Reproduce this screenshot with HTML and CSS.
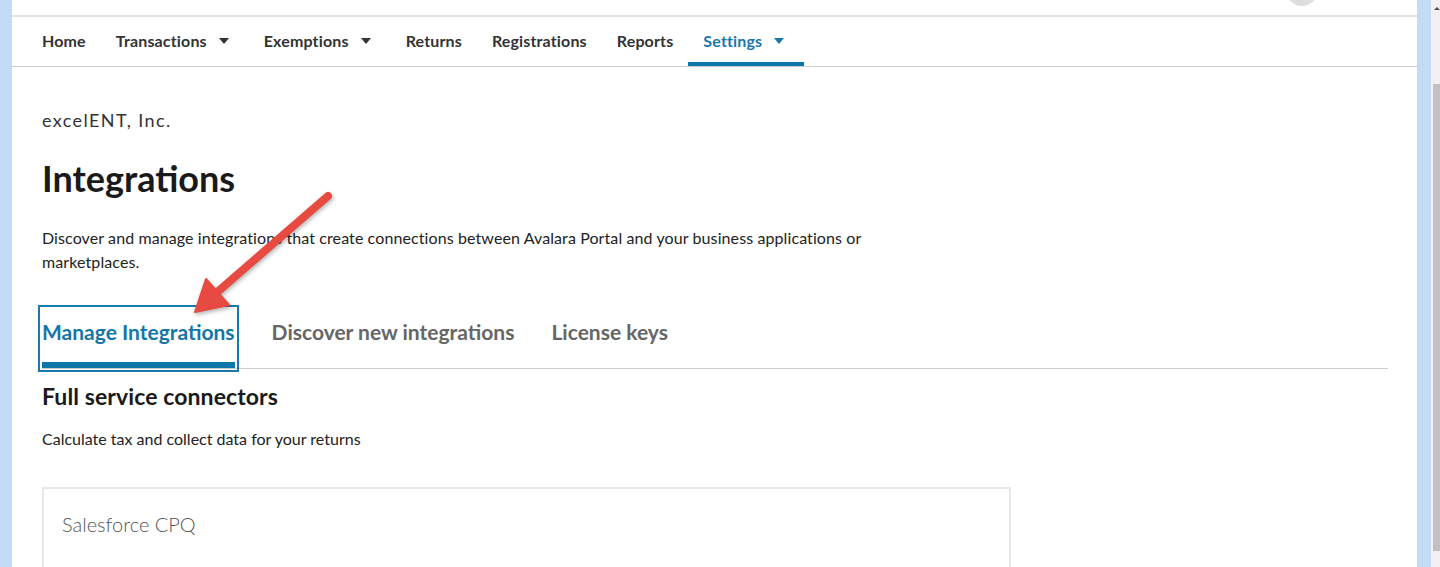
FILE: index.html
```html
<!DOCTYPE html>
<html lang="en">
<head>
    <meta charset="UTF-8">
    <meta name="viewport" content="width=device-width, initial-scale=1.0">
    <title>Integrations</title>
    <link rel="stylesheet" href="styles.css">
</head>
<body>
    <div class="side-strip"></div>

    <div class="app">
        <div class="topbar">
            <div class="avatar"></div>
        </div>

        <nav class="main-nav">
            <a class="nav-item">Home</a>
            <a class="nav-item">Transactions <span class="caret"></span></a>
            <a class="nav-item">Exemptions <span class="caret"></span></a>
            <a class="nav-item">Returns</a>
            <a class="nav-item">Registrations</a>
            <a class="nav-item">Reports</a>
            <a class="nav-item active">Settings <span class="caret"></span></a>
        </nav>

        <div class="content">
            <div class="company">excelENT, Inc.</div>
            <h1>Integrations</h1>
            <p class="intro">Discover and manage integrations that create connections between Avalara Portal and your business applications or marketplaces.</p>

            <div class="tabs">
                <button type="button" class="tab active">Manage Integrations</button>
                <button type="button" class="tab">Discover new integrations</button>
                <button type="button" class="tab">License keys</button>
            </div>

            <h2>Full service connectors</h2>
            <p class="section-desc">Calculate tax and collect data for your returns</p>

            <div class="card">
                <div class="card-title">Salesforce CPQ</div>
            </div>
        </div>
    </div>

    <div class="side-strip right"></div>
    <div class="scrollbar">
        <span class="scroll-up"></span>
        <div class="scroll-thumb"></div>
    </div>

    <!-- annotation arrow drawn over the page -->
    <svg class="annotation" width="1440" height="567" viewBox="0 0 1440 567">
        <line x1="328" y1="196" x2="215" y2="294" stroke="#e64a40" stroke-width="8" stroke-linecap="round"/>
        <polygon points="195,312 229,305 206,279" fill="#e64a40" stroke="#e64a40" stroke-width="2" stroke-linejoin="round"/>
    </svg>
</body>
</html>
```

FILE: styles.css
```css
html, body {
    margin: 0;
    height: 567px;
    overflow: hidden;
}
body {
    position: relative;
    display: flex;
    font-family: Lato, "Open Sans", sans-serif;
    color: #222;
    background: #fff;
}
.side-strip {
    width: 12px;
    flex-shrink: 0;
    background: #c2dcf7;
}
.side-strip.right {
    width: 14px;
}
.app {
    flex: 1;
    min-width: 0;
    background: #fff;
}
.topbar {
    height: 15px;
    display: flex;
    justify-content: flex-end;
    padding-right: 99px;
    overflow: hidden;
    border-bottom: 2px solid #e3e3e3;
}
.avatar {
    width: 32px;
    height: 32px;
    margin-top: -26px;
    border-radius: 50%;
    background: #dedede;
}
.main-nav {
    display: flex;
    height: 49px;
    padding-left: 15px;
    border-bottom: 1px solid #ccc;
}
.nav-item {
    display: flex;
    align-items: center;
    padding: 2px 15px 0;
    font-size: 16px;
    font-weight: 700;
    letter-spacing: 0.15px;
    color: #333;
    border-bottom: 4px solid transparent;
    cursor: pointer;
}
.nav-item.active {
    color: #1a78a8;
    border-bottom-color: #0c77a8;
}
.caret {
    display: inline-block;
    margin: 1px 5px 0 12px;
    border-left: 5px solid transparent;
    border-right: 5px solid transparent;
    border-top: 6px solid currentColor;
}
.content {
    padding: 40px 29px 0 30px;
}
.company {
    font-size: 18px;
    line-height: 26px;
    letter-spacing: 1.4px;
    color: #333;
}
h1 {
    margin: 23px 0 0;
    font-size: 36px;
    line-height: 44px;
    font-weight: 700;
    color: #1a1a1a;
}
.intro {
    margin: 26px 0 0;
    max-width: 840px;
    font-size: 16px;
    line-height: 24px;
    letter-spacing: 0.1px;
    color: #222;
}
.tabs {
    display: flex;
    gap: 37px;
    margin-top: 35px;
    border-bottom: 1px solid #ccc;
}
.tab {
    padding: 9px 0 16px;
    font-family: inherit;
    font-size: 21px;
    line-height: 28px;
    font-weight: 700;
    color: #666;
    background: none;
    border: none;
    border-bottom: 6px solid transparent;
    cursor: pointer;
}
.tab.active {
    color: #1476a8;
    border-bottom-color: #0c77a8;
    outline: 2px solid #1a7aab;
    outline-offset: 2px;
}
h2 {
    margin: 12px 0 0;
    font-size: 23px;
    line-height: 30px;
    font-weight: 700;
    letter-spacing: 0.1px;
    color: #1a1a1a;
}
.section-desc {
    margin: 16px 0 0;
    font-size: 16px;
    line-height: 24px;
    color: #222;
}
.card {
    width: 929px;
    height: 200px;
    margin-top: 36px;
    padding: 21px 18px;
    border: 2px solid #e8e8e8;
}
.card-title {
    font-size: 20px;
    line-height: 28px;
    font-weight: 300;
    color: #555;
}
.scrollbar {
    position: relative;
    width: 9px;
    flex-shrink: 0;
    background: #f1f1f1;
}
.scroll-up {
    position: absolute;
    top: 7px;
    left: 3px;
    border-left: 3px solid transparent;
    border-right: 3px solid transparent;
    border-bottom: 3px solid #505050;
}
.scroll-thumb {
    position: absolute;
    top: 84px;
    left: 2px;
    right: 0;
    height: 467px;
    background: #c1c1c1;
}
.annotation {
    position: absolute;
    top: 0;
    left: 0;
    pointer-events: none;
    filter: drop-shadow(1px 2px 2px rgba(0, 0, 0, 0.3));
}
```
